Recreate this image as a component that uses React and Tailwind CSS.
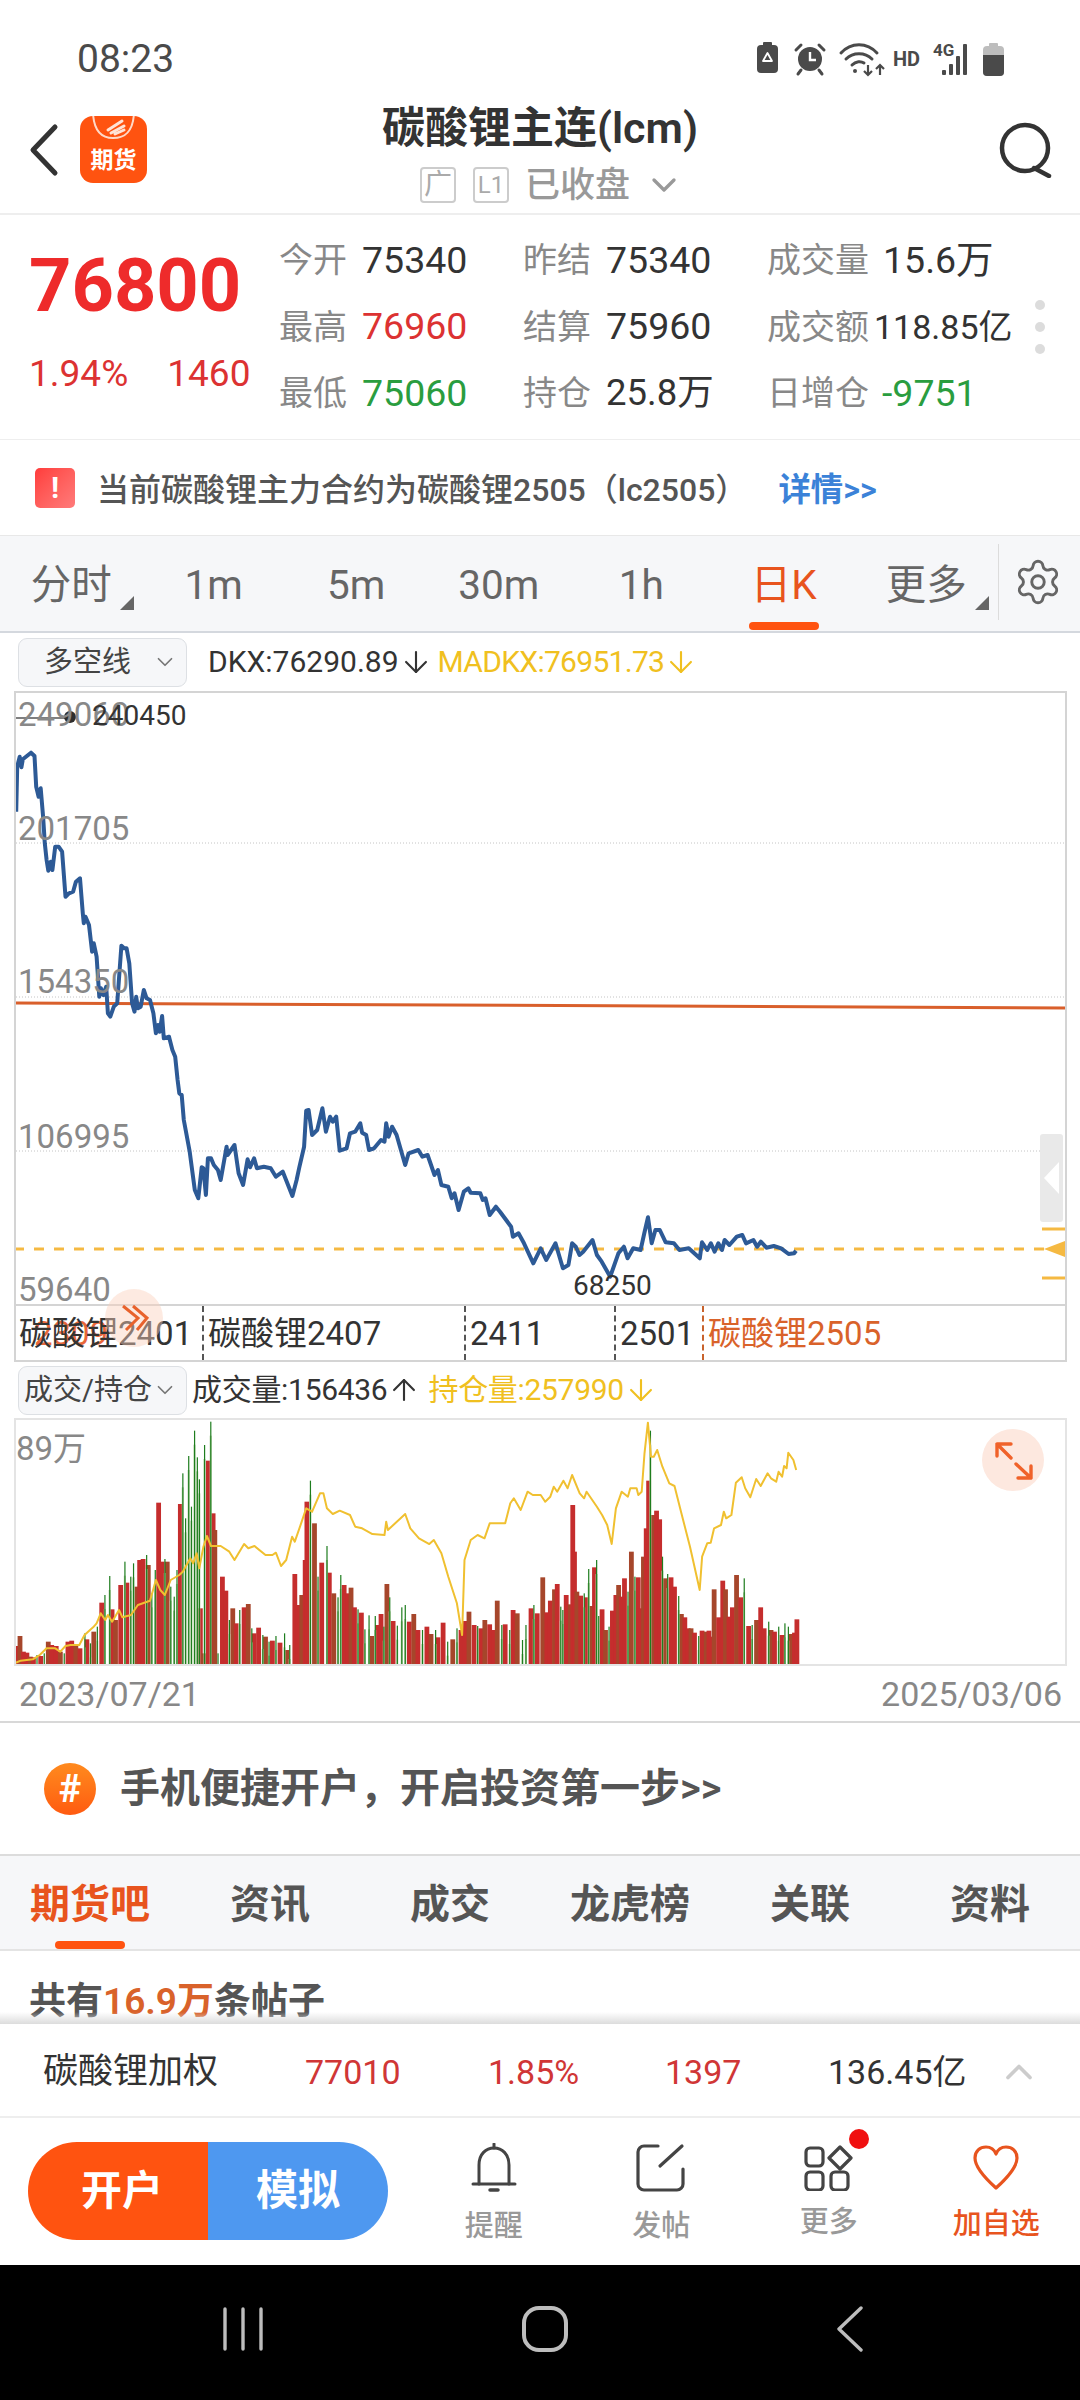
import React from 'react';
import { Settings, ChevronDown, ChevronUp, ArrowDown, ArrowUp } from 'lucide-react';

// price line, read off the chart (x/y in zoom units, converted below)
const priceA = [[47,395],[50,260],[57,230],[62,262],[66,238],[90,218],[100,228],[105,320],[112,350],[118,325],[125,410],[130,490],[135,540],[140,572],[147,545],[152,570],[160,500],[170,500],[180,515],[190,650],[200,640],[212,635],[220,605],[232,595],[240,700],[243,730],[248,710],[258,735],[267,815],[272,790],[280,830],[288,950],[293,925],[300,945],[308,920],[313,1000],[320,1010],[330,980],[340,970],[352,797],[360,805],[367,805],[375,850],[383,970],[390,995],[395,950],[400,985],[408,980],[417,930],[425,955],[435,960],[445,1000],[452,1060],[458,1035],[463,1055],[470,1008],[475,1075],[490,1070],[500,1110],[508,1130],[515,1200]];
const priceB = [[520,40],[527,45],[533,120],[550,215],[565,330],[575,355],[585,262],[590,265],[597,345],[603,235],[612,235],[620,255],[632,270],[640,300],[657,200],[660,225],[680,195],[692,280],[705,315],[718,238],[725,262],[737,235],[745,265],[765,260],[785,265],[800,290],[820,275],[848,348],[860,300],[868,262],[882,200],[888,92],[895,90],[905,165],[920,150],[935,85],[945,155],[957,110],[965,125],[975,110],[985,212],[1005,205],[1015,160],[1030,155],[1045,130],[1050,158],[1062,165],[1070,210],[1085,205],[1105,180],[1115,185],[1120,130],[1127,170],[1137,140],[1150,165],[1175,255],[1185,220],[1213,210],[1225,230],[1240,225],[1260,285],[1270,270],[1280,315],[1300,320],[1310,355],[1318,340],[1330,390],[1345,335],[1358,325],[1365,338],[1393,340],[1400,360],[1408,355],[1420,405],[1438,380]];
const priceC = [[0,395],[30,440],[35,470],[50,460],[65,490],[90,550],[110,505],[125,540],[150,490],[170,565],[185,555],[195,490],[205,500],[215,525],[225,515],[250,480],[262,525],[275,545],[298,590],[320,520],[335,500],[345,535],[360,505],[380,510],[390,460],[400,412],[410,490],[420,450],[432,450],[448,487],[470,490],[485,510],[510,505],[540,535],[546,487],[560,510],[570,490],[580,515],[590,490],[600,510],[607,480],[620,495],[640,470],[655,465],[665,490],[685,480],[695,500],[705,485],[720,503],[740,498],[760,505],[780,522],[795,520],[800,512]];

const pricePts = [
  ...priceA.map(([x, y]) => [x / 2.9, 680 + y / 3]),
  ...priceB.map(([x, y]) => [x / 2.9, 1080 + y / 3]),
  ...priceC.map(([x, y]) => [500 + x / 2.703, 1080 + y / 3]),
].map(p => p.map(n => n.toFixed(1)).join(',')).join(' ');

// open interest line
const oiA = [[42,910],[60,902],[95,898],[115,885],[135,865],[160,865],[175,875],[190,858],[205,855],[230,855],[245,825],[270,802],[280,790],[292,760],[305,780],[313,765],[325,785],[345,750],[355,772],[380,765],[400,735],[435,722],[452,660],[465,690],[478,705],[495,660],[520,645],[530,635],[552,595],[560,610],[570,580],[578,625],[590,560],[600,528],[612,558],[640,558],[665,575],[680,600],[708,552],[720,565],[738,558],[770,585],[790,585],[800,578],[815,618],[830,600],[847,530],[855,545],[875,485],[888,445],[905,455],[928,400],[938,400],[948,445],[965,462],[985,452],[1015,465],[1030,500],[1050,505],[1080,522],[1115,525],[1120,485],[1125,510],[1175,462],[1190,505],[1215,535],[1245,552],[1258,540],[1280,580],[1300,650],[1325,730],[1340,825],[1347,600],[1365,540],[1385,525],[1405,535],[1420,490],[1465,490],[1480,430],[1490,415],[1510,450],[1530,395],[1545,405],[1568,405]];
const oiB = [[15,425],[30,410],[40,380],[50,395],[68,362],[80,385],[93,345],[115,400],[128,415],[135,395],[165,440],[180,465],[195,495],[208,552],[220,445],[237,395],[255,410],[262,385],[280,385],[285,405],[295,395],[303,280],[313,188],[322,290],[330,290],[340,270],[355,320],[375,370],[390,378],[410,460],[435,560],[463,690],[470,590],[485,550],[495,548],[505,505],[525,495],[533,455],[540,475],[555,465],[568,368],[585,352],[595,385],[610,412],[627,357],[640,378],[660,340],[670,355],[685,365],[692,335],[702,350],[708,318],[715,325],[720,278],[735,300],[743,330]];
const oiPts = [
  ...oiA.map(([x, y]) => [x / 2.9, 1360 + y / 3]),
  ...oiB.map(([x, y]) => [540 + x / 2.9, 1360 + y / 3]),
].map(p => p.map(n => n.toFixed(1)).join(',')).join(' ');

// volume bars: r = up day, g = down day
const volA = 'g42 860,r50 858,r58 828,r68 875,r78 878,r88 890,r97 892,g107 885,r118 888,g128 880,r140 845,r150 855,r163 858,r175 875,g186 880,r197 845,r208 842,r220 855,r232 865,g246 820,r252 838,g262 850,r272 815,g282 800,r295 728,g304 705,g318 648,r325 748,r335 780,r350 675,g362 605,r368 668,g379 650,g387 610,r397 680,r405 600,r415 597,g425 585,r430 615,g440 700,g450 630,r460 428,r470 605,g478 597,r485 605,g495 680,g505 710,g513 630,r523 432,g530 340,g538 475,g547 288,g555 440,g564 212,g572 292,r581 745,g578 358,r590 880,g593 255,r604 302,g611 185,r618 460,r623 510,g632 880,r645 650,r655 692,g665 780,r675 745,r685 790,g695 750,r708 742,r720 732,g730 805,r737 820,r750 803,g762 825,r770 830,g780 845,r790 842,g800 828,r812 848,g825 820,r832 870,g840 855,r855 642,r865 735,r875 705,r885 600,r890 425,g900 362,r912 490,g922 650,r933 608,g948 558,r955 638,r968 700,g980 712,g988 645,r998 675,r1010 700,r1018 683,r1028 742,g1038 748,r1048 758,g1058 808,g1070 766,r1078 828,g1088 768,r1095 795,r1105 762,g1113 800,r1122 672,g1130 712,r1140 783,g1152 797,g1165 742,g1175 735,r1187 785,r1200 762,r1212 810,g1225 810,r1238 800,r1250 822,g1263 810,r1270 832,r1285 788,g1298 845,r1313 838,g1325 805,r1337 810,r1348 783,r1360 755,r1375 795,g1385 798,r1395 805,r1406 780,r1420 793,r1432 810,r1442 722,g1455 795,r1465 793,g1478 810,r1488 750,r1500 760,g1515 840,g1525 795,r1540 745,g1548 735,r1558 760';
const volB = 'r8 652,r20 757,r30 722,r42 688,r50 672,g60 740,g66 750,r76 705,r88 733,r95 435,r100 575,r107 695,r118 707,g128 700,r135 712,g141 627,r150 738,r158 622,g164 600,g170 768,r180 748,r190 810,g200 800,r210 752,r220 705,r228 675,r236 710,r245 655,g255 695,r265 575,g275 650,r285 652,r292 745,r300 590,r308 505,r315 362,g320 212,r329 465,r338 452,r347 478,g355 590,r362 655,g370 642,r380 652,r390 680,g402 708,r410 762,r420 772,r430 805,r438 805,r448 818,g460 828,r470 812,r482 815,r490 812,r497 830,r505 688,r518 772,r530 662,r538 688,r548 770,r558 742,r570 645,r582 712,g592 655,r605 798,g615 795,r628 780,r640 742,r650 805,g663 785,r670 810,r680 815,g692 800,r702 825,g710 790,g720 800,r728 822,r738 818,r745 778';

const parseBars = (s, x0) => s.split(',').map(t => {
  const [a, b] = t.slice(1).split(' ').map(Number);
  return { kind: t[0], x: x0 + a / 2.9, y: 1360 + b / 3 };
});
const bars = [...parseBars(volA, 0), ...parseBars(volB, 540)];
const redBars = bars.filter(b => b.kind === 'r');
const greenBars = bars.filter(b => b.kind === 'g');

function BackArrow() {
  return (
    <svg width="32" height="54" viewBox="0 0 32 54" fill="none">
      <path d="M27 4 L5 27 L27 50" stroke="#333" strokeWidth="5" strokeLinecap="round" strokeLinejoin="round" />
    </svg>
  );
}

function Logo() {
  return (
    <div className="relative w-[67px] h-[67px] ml-[20px] rounded-[13px] bg-[#ff5310] overflow-hidden flex items-end justify-center">
      <svg className="absolute top-0 left-0" width="67" height="36" viewBox="0 0 67 36" fill="none">
        <path d="M13 -3 C14 18 24 22 33 22 C43 22 53 18 54 -3" stroke="#ffd9c8" strokeWidth="2" />
        <path d="M28 14 L42 5 M31 17 L44 10 M35 18 L44 14" stroke="#ffe3d6" strokeWidth="3" strokeLinecap="round" />
      </svg>
      <span className="text-[23px] leading-none font-bold text-white mb-[11px]">期货</span>
    </div>
  );
}

function StatusIcons() {
  return (
    <div className="flex items-center mr-[76px] h-[34px]">
      <svg width="130" height="36" viewBox="0 0 130 36" fill="none">
        <rect x="0" y="4" width="21" height="28" rx="4" fill="#4a4a4a" />
        <rect x="6" y="1" width="9" height="4" rx="1" fill="#4a4a4a" />
        <path d="M10.5 12 L15 20 L6 20 Z" stroke="#fff" strokeWidth="1.8" strokeLinejoin="round" />
        <circle cx="53" cy="18" r="12" fill="#4a4a4a" />
        <path d="M53 11 V19 H59" stroke="#fff" strokeWidth="2.4" />
        <path d="M39 9 L44 4 M67 9 L62 4 M44 29 L41 33 M62 29 L65 33" stroke="#4a4a4a" strokeWidth="3" strokeLinecap="round" />
        <path d="M84 12 C94 1 110 1 120 12 M89 18 C96 11 108 11 115 18 M95 24 C99 20 104 20 107 22" stroke="#4a4a4a" strokeWidth="3" strokeLinecap="round" />
        <circle cx="98" cy="30" r="2" fill="#4a4a4a" />
        <path d="M111 24 V34 M107 30 L111 34 L115 30 M123 34 V24 M119 28 L123 24 L127 28" stroke="#4a4a4a" strokeWidth="2.2" />
      </svg>
      <span className="ml-[6px] text-[20px] leading-none font-bold text-[#4a4a4a]">HD</span>
      <div className="relative ml-[13px] w-[42px] h-[34px]">
        <span className="absolute left-0 top-0 text-[17px] leading-none font-bold text-[#4a4a4a]">4G</span>
        <svg className="absolute left-0 top-0" width="42" height="34" viewBox="0 0 42 34">
          <rect x="9" y="28" width="4" height="5" rx="1" fill="#4a4a4a" />
          <rect x="16" y="22" width="4" height="11" rx="1" fill="#4a4a4a" />
          <rect x="23" y="14" width="4" height="19" rx="1" fill="#4a4a4a" />
          <rect x="30" y="2" width="4" height="31" rx="1" fill="#4a4a4a" />
        </svg>
      </div>
      <svg className="ml-[8px]" width="21" height="33" viewBox="0 0 21 33">
        <rect x="6" y="0" width="9" height="4" rx="1" fill="#bdbdbd" />
        <rect x="0" y="3" width="21" height="30" rx="4" fill="#bdbdbd" />
        <path d="M0 12 H21 V29 a4 4 0 0 1 -4 4 H4 a4 4 0 0 1 -4 -4 Z" fill="#4a4a4a" />
      </svg>
    </div>
  );
}

function Stat({ label, value, color = 'text-[#333]', gap = 'ml-[15px]', size = 'text-[37.5px]' }) {
  return (
    <div className="flex items-center h-[66.5px]">
      <span className="text-[34px] leading-none text-[#888]">{label}</span>
      <span className={`${size} leading-none ${gap} ${color}`}>{value}</span>
    </div>
  );
}

function QuoteBlock() {
  return (
    <div className="relative flex h-[225px] border-b border-[#eee]">
      <div className="w-[279px] pl-[29px] pt-[26px] shrink-0">
        <div className="text-[74px] leading-[90px] font-bold text-[#ee2b2b]">76800</div>
        <div className="flex mt-[24px] text-[37px] leading-none text-[#dc3232]">
          <span>1.94%</span>
          <span className="ml-[39px]">1460</span>
        </div>
      </div>
      <div className="grid grid-cols-[244px_244px_1fr] pt-[12px] h-fit flex-1">
        <Stat label="今开" value="75340" />
        <Stat label="昨结" value="75340" />
        <Stat label="成交量" value="15.6万" gap="ml-[14px]" />
        <Stat label="最高" value="76960" color="text-[#dc3232]" />
        <Stat label="结算" value="75960" />
        <Stat label="成交额" value="118.85亿" gap="ml-[5px]" size="text-[34px]" />
        <Stat label="最低" value="75060" color="text-[#2a9d3f]" />
        <Stat label="持仓" value="25.8万" size="text-[36.5px]" />
        <Stat label="日增仓" value="-9751" color="text-[#2a9d3f]" gap="ml-[13px]" />
      </div>
      <div className="absolute right-[35px] top-[85px] flex flex-col gap-[12px]">
        <div className="w-[10px] h-[10px] rounded-full bg-[#dcdcdc]" />
        <div className="w-[10px] h-[10px] rounded-full bg-[#dcdcdc]" />
        <div className="w-[10px] h-[10px] rounded-full bg-[#dcdcdc]" />
      </div>
    </div>
  );
}

function Notice() {
  return (
    <div className="flex items-center h-[95px] pl-[35px] pt-[5px]">
      <div className="w-[40px] h-[40px] -mt-[5px] rounded-[5px] bg-gradient-to-br from-[#ff3b3b] to-[#ff7a7a] flex items-center justify-center text-white text-[30px] font-bold leading-none">!</div>
      <span className="ml-[22px] text-[32px] leading-none font-medium text-[#555] whitespace-nowrap">当前碳酸锂主力合约为碳酸锂2505（lc2505）</span>
      <span className="ml-[31px] text-[32.4px] leading-none font-semibold text-[#3b82d8] whitespace-nowrap">详情&gt;&gt;</span>
    </div>
  );
}

function CornerMark() {
  return <span className="absolute right-[9px] bottom-[21px] w-0 h-0 border-l-[14px] border-l-transparent border-b-[14px] border-b-[#666]" />;
}

function PeriodTabs() {
  const items = ['分时', '1m', '5m', '30m', '1h', '日K', '更多'];
  return (
    <div className="flex items-stretch h-[98px] bg-[#f6f7f9] border-t border-t-[#e8e8e8] border-b-2 border-b-[#d4d8de]">
      {items.map(t => (
        <div key={t} className={`relative w-[142.5px] flex items-center justify-center pt-[3px] text-[40.5px] leading-none ${t === '日K' ? 'text-[#e8541e]' : 'text-[#666]'}`}>
          {t}
          {(t === '分时' || t === '更多') && <CornerMark />}
          {t === '日K' && <span className="absolute bottom-[1px] left-[36px] w-[70px] h-[8px] rounded-[4px] bg-[#ff5310]" />}
        </div>
      ))}
      <div className="self-center w-px h-[76px] bg-[#dcdcdc] mb-[4px]" />
      <div className="flex items-center pl-[14px] pb-[4px]">
        <Settings size={50} strokeWidth={1.4} color="#666" />
      </div>
    </div>
  );
}

function SelectBox({ label }) {
  return (
    <div className="flex items-center justify-between w-[169px] h-[49px] pl-[5px] pr-[8px] rounded-[9px] border border-[#dde0e4] bg-[#f6f7f9] shrink-0">
      <span className="text-[29px] leading-none text-[#444] whitespace-nowrap">{label}</span>
      <ChevronDown size={26} strokeWidth={1.6} color="#777" />
    </div>
  );
}

function IndicatorRow({ label, leftText, rightText, leftIcon, gapLeft, gapRight, trackLeft, trackRight, h }) {
  return (
    <div className={`flex items-center pl-[18px] ${h}`}>
      <SelectBox label={label} />
      <span className={`${gapLeft} ${trackLeft} text-[30px] leading-none text-[#333] whitespace-nowrap`}>{leftText}</span>
      {leftIcon}
      <span className={`${gapRight} ${trackRight} text-[30px] leading-none text-[#f0c020] whitespace-nowrap`}>{rightText}</span>
      <ArrowDown size={34} strokeWidth={1.5} color="#f0c020" />
    </div>
  );
}

function ChartLabel({ x, y, children, cls = 'text-[33px] text-[#888]' }) {
  return (
    <span className={`absolute leading-none whitespace-nowrap ${cls}`} style={{ left: x - 16, top: y - 693 - 17 }}>{children}</span>
  );
}

function PriceChart() {
  return (
    <div className="relative flex flex-col ml-[14px] w-[1053px] h-[671px] border-2 border-[#d4d4d4]">
      <div className="relative flex-1">
        <svg className="absolute left-0 top-0" width="1049" height="612" viewBox="16 693 1049 612" fill="none">
          <path d="M16 843 H1064 M16 997 H1064 M16 1151 H1040" stroke="#c4c4c4" strokeWidth="1" strokeDasharray="1 2" />
          <path d="M16 718 H72" stroke="#555" strokeWidth="1.5" />
          <circle cx="70" cy="717" r="6" fill="#2d2d2d" />
          <path d="M14 1003 L1065 1008" stroke="#d95f2b" strokeWidth="3" />
          <path d="M14 1249 H1048" stroke="#f5b942" strokeWidth="3" strokeDasharray="10 10" />
          <polyline points={pricePts} stroke="#2d5a96" strokeWidth="4" strokeLinejoin="round" />
          <path d="M1042 1229 H1065 M1042 1278 H1065" stroke="#f5b942" strokeWidth="3" />
          <path d="M1044 1249 L1065 1241 V1257 Z" fill="#f5b942" />
        </svg>
        <ChartLabel x={18} y={715}>249060</ChartLabel>
        <ChartLabel x={92} y={719} cls="text-[28px] text-[#333]">240450</ChartLabel>
        <ChartLabel x={18} y={829}>201705</ChartLabel>
        <ChartLabel x={18} y={982}>154350</ChartLabel>
        <ChartLabel x={18} y={1137}>106995</ChartLabel>
        <ChartLabel x={18} y={1290}>59640</ChartLabel>
        <ChartLabel x={573} y={1289} cls="text-[28px] text-[#333]">68250</ChartLabel>
        <div className="absolute left-[1024px] top-[441px] w-[23px] h-[88px] rounded-[3px] bg-[#e9e9e9] flex items-center justify-center">
          <span className="w-0 h-0 border-y-[16px] border-y-transparent border-r-[15px] border-r-white" />
        </div>
      </div>
      <div className="flex h-[56px] border-t-2 border-[#d4d4d4] text-[33px] leading-none text-[#333]">
        <div className="relative w-[186px] pl-[3px] flex items-center whitespace-nowrap">
          <span className="absolute left-[18px] text-[#e8673a]">2309</span>
          <span className="relative">碳酸锂2401</span>
        </div>
        <div className="w-[262px] pl-[4px] flex items-center border-l-2 border-dashed border-[#555] whitespace-nowrap">碳酸锂2407</div>
        <div className="w-[150px] pl-[4px] flex items-center border-l-2 border-dashed border-[#555]">2411</div>
        <div className="w-[88px] pl-[4px] flex items-center border-l-2 border-dashed border-[#555]">2501</div>
        <div className="pl-[4px] flex items-center border-l-2 border-dashed border-[#c8622c] text-[#d9622a] whitespace-nowrap">碳酸锂2505</div>
      </div>
      <div className="absolute left-[89px] top-[596px] w-[58px] h-[58px] rounded-full bg-[#fbd0bd]/45">
        <svg className="absolute left-0 top-0" width="58" height="58" viewBox="0 0 58 58" fill="none">
          <path d="M18 17 L33 29 L21 41 M28 17 L42 29 L32 41" stroke="#e8622c" strokeWidth="3" />
        </svg>
      </div>
    </div>
  );
}

function VolumeChart() {
  return (
    <div className="relative ml-[14px] w-[1053px] h-[248px] border-2 border-[#e4e4e4]">
      <svg className="absolute left-0 top-0" width="1049" height="244" viewBox="16 1420 1049 244" fill="none">
        {redBars.map((b, i) => (
          <rect key={i} x={b.x - 2.4} y={b.y} width="4.8" height={1665 - b.y} fill={i % 3 === 1 ? '#a6462b' : '#c52d2d'} />
        ))}
        {greenBars.map((b, i) => (
          <g key={i}>
            <rect x={b.x - 1} y={b.y + 14} width="2" height={1665 - b.y} fill="#b2cfa0" />
            <rect x={b.x - 0.5} y={b.y} width="1.2" height={1665 - b.y} fill="#1e7d1e" />
          </g>
        ))}
        <polyline points={oiPts} stroke="#f0c030" strokeWidth="2" strokeLinejoin="round" />
      </svg>
      <span className="absolute left-0 top-[12px] text-[33px] leading-none text-[#888]">89万</span>
      <div className="absolute left-[966px] top-[9px] w-[62px] h-[62px] rounded-full bg-[#fde8df]">
        <svg className="absolute left-0 top-0" width="62" height="62" viewBox="982 1428 62 62" fill="none">
          <path d="M997 1455 V1443 H1011 M997 1443 L1011 1457 M1031 1465 V1477 H1018 M1031 1477 L1016 1463" stroke="#f0622a" strokeWidth="3.4" strokeLinecap="round" strokeLinejoin="round" />
        </svg>
      </div>
    </div>
  );
}

function BellIcon() {
  return (
    <svg width="46" height="50" viewBox="0 0 46 50" fill="none" stroke="#444" strokeWidth="3" strokeLinecap="round">
      <path d="M23 1 V5" />
      <path d="M8 41 V22 C8 11 15 5 23 5 C31 5 38 11 38 22 V41" />
      <path d="M2 41 H44" />
      <path d="M19 47 H27" strokeWidth="3.5" />
    </svg>
  );
}

function PostIcon() {
  return (
    <svg width="50" height="50" viewBox="0 0 50 50" fill="none" stroke="#444" strokeWidth="3.2" strokeLinecap="round">
      <path d="M22 3 H8 A6 6 0 0 0 2 9 V41 A6 6 0 0 0 8 47 H41 A6 6 0 0 0 47 41 V26" />
      <path d="M24 23 L46 3" />
    </svg>
  );
}

function MoreIcon() {
  return (
    <svg width="50" height="46" viewBox="0 0 50 46" fill="none" stroke="#444" strokeWidth="3.2">
      <rect x="2" y="3" width="17" height="18" rx="4" />
      <rect x="2" y="27" width="17" height="18" rx="4" />
      <rect x="27" y="27" width="17" height="18" rx="4" />
      <path d="M36 2 L47 13 L36 24 L25 13 Z" strokeLinejoin="round" />
    </svg>
  );
}

function HeartIcon() {
  return (
    <svg width="48" height="46" viewBox="0 0 48 46" fill="none" stroke="#e8541e" strokeWidth="3.2" strokeLinejoin="round">
      <path d="M24 43 C14 34 3 22 3 13 C3 6 8 2 14 2 C18 2 22 4 24 9 C26 4 30 2 34 2 C40 2 45 6 45 13 C45 22 34 34 24 43 Z" />
    </svg>
  );
}

function ActionItem({ icon, label, cls = 'text-[#999]', mt = 'mt-[18px]', badge }) {
  return (
    <div className="relative w-[167.5px] flex flex-col items-center">
      <div className="relative h-[52px] flex items-center">
        {icon}
        {badge && <span className="absolute -right-[15px] -top-[13px] w-[20px] h-[20px] rounded-full bg-[#f01010]" />}
      </div>
      <span className={`${mt} text-[29px] leading-none font-medium ${cls}`}>{label}</span>
    </div>
  );
}

export default function App() {
  return (
    <div className="w-[1080px] h-[2400px] flex flex-col bg-white overflow-hidden font-[Roboto,'Noto_Sans_CJK_SC',sans-serif]">
      {/* status bar */}
      <div className="flex items-center justify-between h-[90px] pl-[77px] pt-[28px] shrink-0">
        <span className="text-[39px] leading-none text-[#4a4a4a]">08:23</span>
        <StatusIcons />
      </div>

      {/* title bar */}
      <div className="relative flex items-center justify-between h-[125px] pl-[28px] pr-[28px] pb-[4px] border-b-2 border-[#eee] shrink-0">
        <div className="flex items-center">
          <BackArrow />
          <Logo />
        </div>
        <div className="absolute left-0 right-0 top-0 flex flex-col items-center">
          <span className="text-[43px] leading-none font-semibold text-[#333] mt-[17px]">碳酸锂主连(lcm)</span>
          <div className="flex items-center mt-[15px] ml-[24px]">
            <span className="w-[36px] h-[36px] rounded-[4px] border-2 border-[#ccc] flex items-center justify-center text-[28px] leading-none text-[#aaa]">广</span>
            <span className="ml-[17px] w-[36px] h-[36px] rounded-[4px] border-2 border-[#ccc] flex items-center justify-center text-[24px] leading-none text-[#aaa]">L1</span>
            <span className="ml-[16px] text-[35px] leading-none font-medium text-[#999]">已收盘</span>
            <ChevronDown className="ml-[14px]" size={40} strokeWidth={2} color="#999" />
          </div>
        </div>
        <svg width="54" height="56" viewBox="0 0 54 56" fill="none" stroke="#333" strokeWidth="4.5" strokeLinecap="round">
          <circle cx="27" cy="26" r="23" />
          <path d="M36 46 L51 54" />
        </svg>
      </div>

      <QuoteBlock />
      <Notice />
      <PeriodTabs />
      <IndicatorRow
        label={<span className="pl-[20px]">多空线</span>}
        leftText="DKX:76290.89"
        leftIcon={<ArrowDown size={34} strokeWidth={1.5} color="#333" />}
        rightText="MADKX:76951.73"
        gapLeft="ml-[21px]"
        gapRight="ml-[5px]"
        trackRight="tracking-[-0.7px]"
        h="h-[58px]"
      />
      <PriceChart />
      <IndicatorRow
        label="成交/持仓"
        leftText="成交量:156436"
        leftIcon={<ArrowUp size={34} strokeWidth={1.5} color="#333" />}
        rightText="持仓量:257990"
        gapLeft="ml-[5px]"
        gapRight="ml-[7px]"
        trackLeft="tracking-[-0.3px]"
        trackRight="tracking-[-0.3px]"
        h="h-[56px]"
      />
      <VolumeChart />
      <div className="flex items-center justify-between h-[57px] pl-[19px] pr-[18px] border-b-2 border-[#d8d8d8] text-[34px] leading-none text-[#888]">
        <span>2023/07/21</span>
        <span>2025/03/06</span>
      </div>

      {/* account banner */}
      <div className="flex items-center h-[131px] pl-[44px]">
        <div className="w-[52px] h-[52px] rounded-full bg-gradient-to-b from-[#ff8a1e] to-[#ff5a10] flex items-center justify-center text-white text-[38px] font-bold leading-none">#</div>
        <span className="ml-[24px] text-[40px] leading-none font-semibold text-[#555] whitespace-nowrap">手机便捷开户，开启投资第一步&gt;&gt;</span>
      </div>

      {/* content tabs */}
      <div className="grid grid-cols-6 h-[97px] bg-[#f6f7f9] border-t-2 border-t-[#dcdcdc] border-b-2 border-b-[#e4e4e4]">
        {['期货吧', '资讯', '成交', '龙虎榜', '关联', '资料'].map(t => (
          <div key={t} className={`relative flex items-center justify-center pt-[4px] text-[40px] leading-none font-semibold ${t === '期货吧' ? 'text-[#e8541e]' : 'text-[#555]'}`}>
            {t}
            {t === '期货吧' && <span className="absolute bottom-0 left-[55px] w-[70px] h-[8px] rounded-[4px] bg-[#ff5310]" />}
          </div>
        ))}
      </div>

      {/* post count, sits right above the fixed bottom panel */}
      <div className="relative flex-1 pl-[29px] pt-[30px]">
        <div className="text-[37px] leading-[42px] font-semibold text-[#555] whitespace-nowrap">
          共有<span className="text-[#d9622a]">16.9万</span>条帖子
        </div>
        <div className="absolute left-0 right-0 bottom-0 h-[12px] bg-gradient-to-b from-transparent to-[#dcdcdc]" />
      </div>

      {/* index row */}
      <div className="grid grid-cols-[305px_183px_177px_163px_177px_1fr] items-center h-[94px] pl-[43px] pt-[3px] border-b-2 border-[#eee] text-[34px] leading-none shrink-0">
        <span className="text-[35px] text-[#333]">碳酸锂加权</span>
        <span className="-ml-[43px] text-[#d03636]">77010</span>
        <span className="-ml-[43px] text-[#d03636]">1.85%</span>
        <span className="-ml-[43px] text-[#d03636]">1397</span>
        <span className="-ml-[43px] text-[#333] whitespace-nowrap">136.45亿</span>
        <ChevronUp className="-ml-[51px]" size={44} strokeWidth={2} color="#ccc" />
      </div>

      {/* action row */}
      <div className="flex items-start h-[147px] pl-[28px] pt-[24px] shrink-0">
        <div className="flex w-[360px] h-[98px] rounded-[49px] overflow-hidden text-white leading-none shrink-0">
          <div className="w-[180px] flex items-center justify-center pl-[8px] text-[41px] font-semibold bg-[#ff5310]">开户</div>
          <div className="w-[180px] flex items-center justify-center text-[42px] font-bold bg-[#4e98f0]">模拟</div>
        </div>
        <div className="flex ml-[22px]">
          <ActionItem icon={<BellIcon />} label="提醒" />
          <ActionItem icon={<PostIcon />} label="发帖" />
          <ActionItem icon={<MoreIcon />} label="更多" mt="mt-[14px]" badge />
          <ActionItem icon={<HeartIcon />} label="加自选" cls="text-[#e8541e]" mt="mt-[16px]" />
        </div>
      </div>

      {/* android nav */}
      <div className="flex items-center h-[135px] bg-black pb-[8px] shrink-0">
        <div className="flex items-center w-[1080px]">
          <svg className="ml-[222px]" width="42" height="44" viewBox="0 0 42 44" fill="none" stroke="#bdbdbd" strokeWidth="3.4" strokeLinecap="round">
            <path d="M3 2 V42 M21 2 V42 M39 2 V42" />
          </svg>
          <svg className="ml-[258px]" width="46" height="46" viewBox="0 0 46 46" fill="none" stroke="#bdbdbd" strokeWidth="4">
            <rect x="2" y="2" width="42" height="42" rx="15" />
          </svg>
          <svg className="ml-[268px]" width="28" height="46" viewBox="0 0 28 46" fill="none" stroke="#bdbdbd" strokeWidth="3.4" strokeLinecap="round" strokeLinejoin="round">
            <path d="M25 2 L3 23 L25 44" />
          </svg>
        </div>
      </div>
    </div>
  );
}
